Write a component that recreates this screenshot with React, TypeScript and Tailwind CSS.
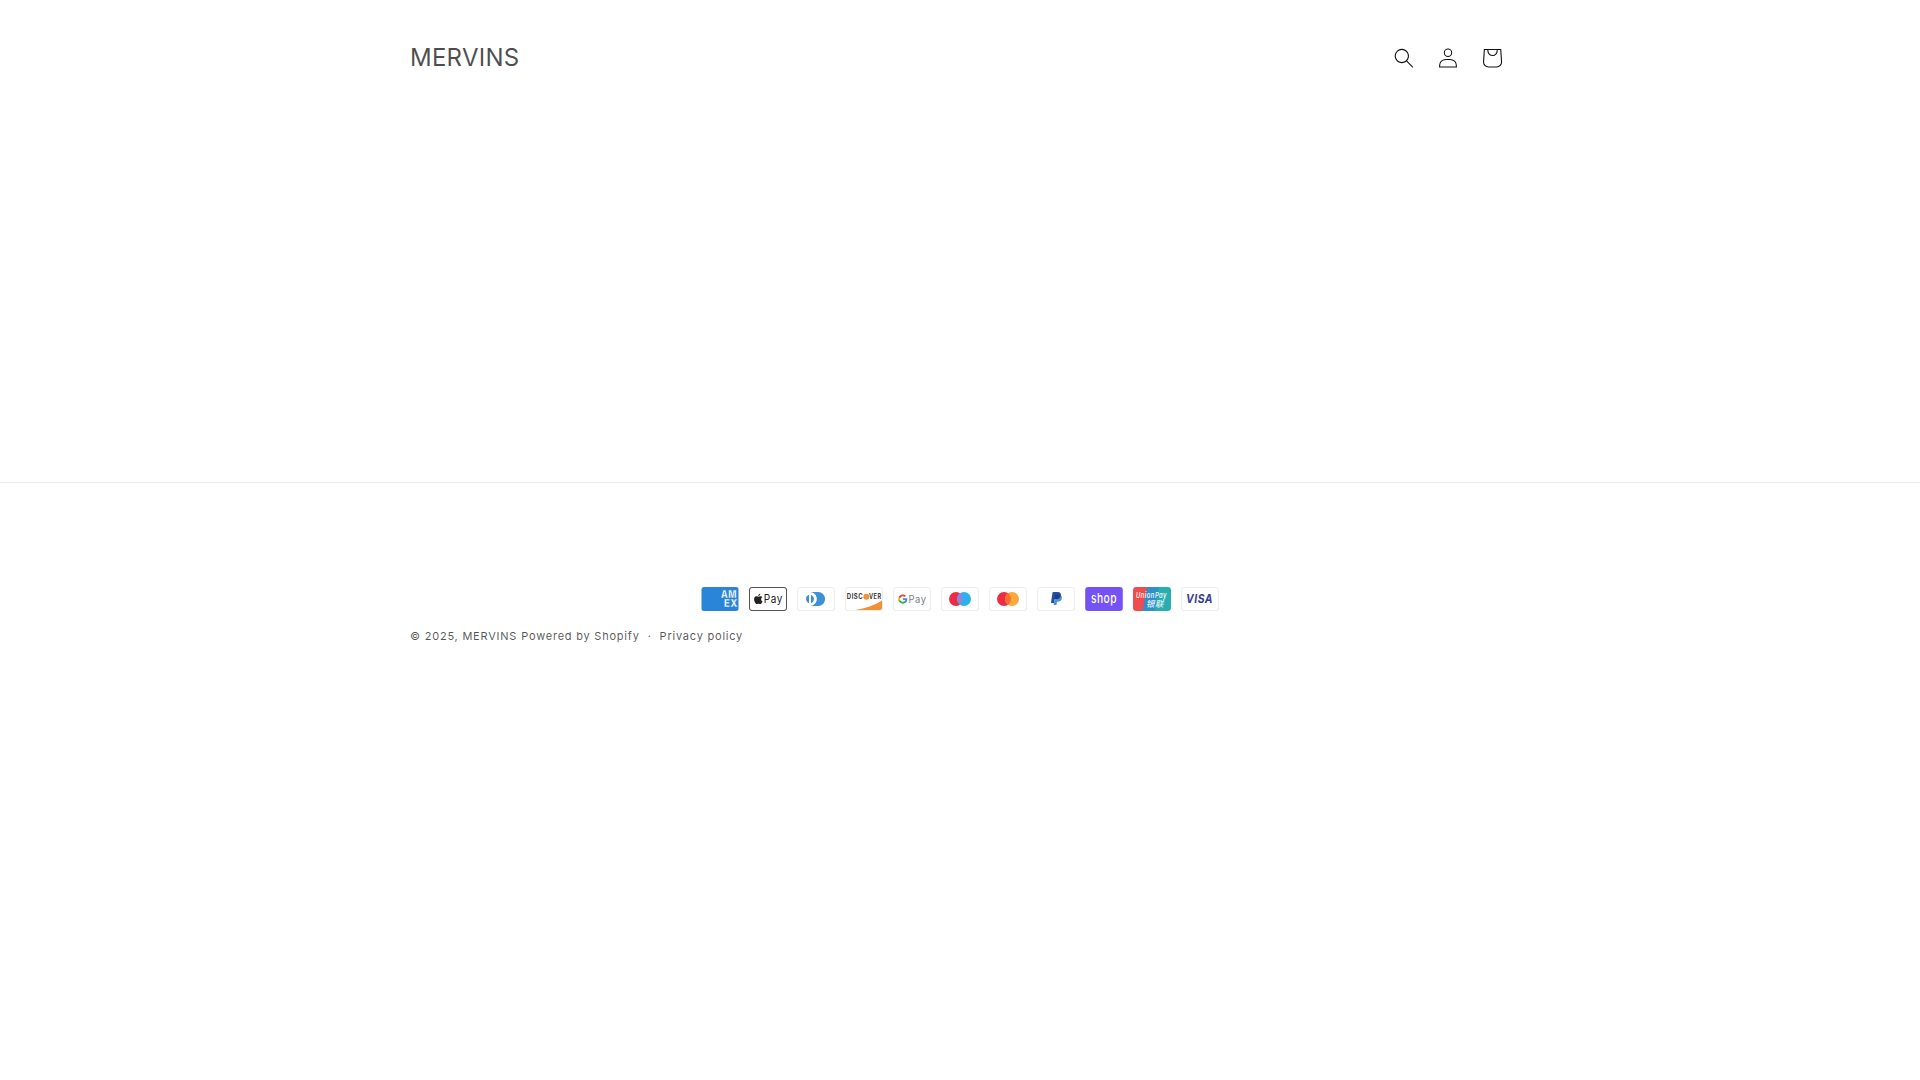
import React from "react";

const Frame = () => (
  <>
    <path opacity=".07" d="M35 0H3C1.3 0 0 1.3 0 3v18c0 1.7 1.4 3 3 3h32c1.7 0 3-1.3 3-3V3c0-1.7-1.4-3-3-3z" />
    <path fill="#fff" d="M35 1c1.1 0 2 .9 2 2v18c0 1.1-.9 2-2 2H3c-1.1 0-2-.9-2-2V3c0-1.1.9-2 2-2h32" />
  </>
);

const Svg = ({ children, label }: { children: React.ReactNode; label: string }) => (
  <svg viewBox="0 0 38 24" width="38" height="24" role="img" aria-label={label} className="block">
    {children}
  </svg>
);

const FONT = "Inter, 'Liberation Sans', sans-serif";

const Amex = () => (
  <Svg label="American Express">
    <rect x=".5" width="37" height="24" rx="2.5" fill="#2a84d8" />
    <g fontFamily={FONT} fontWeight="800" fill="#fff" stroke="#2a84d8" strokeWidth=".3">
      <text x="20" y="11.4" fontSize="10" textLength="16" lengthAdjust="spacingAndGlyphs">AM</text>
      <text x="23" y="20.2" fontSize="10" textLength="14" lengthAdjust="spacingAndGlyphs">EX</text>
    </g>
  </Svg>
);

const Apple = () => (
  <Svg label="Apple Pay">
    <path fill="#000" opacity=".68" d="M35 0H3C1.3 0 0 1.3 0 3v18c0 1.7 1.4 3 3 3h32c1.7 0 3-1.3 3-3V3c0-1.7-1.4-3-3-3z" />
    <path fill="#fff" d="M35 1c1.1 0 2 .9 2 2v18c0 1.1-.9 2-2 2H3c-1.1 0-2-.9-2-2V3c0-1.1.9-2 2-2h32" />
    <path fill="#222" d="M10.7 8.3c-.4.5-1 .8-1.5.8-.1-.6.2-1.2.5-1.6.4-.5 1-.8 1.5-.8.1.6-.1 1.2-.5 1.6zm.5.9c-.8 0-1.5.5-1.9.5s-1-.5-1.7-.4c-.9 0-1.7.5-2.1 1.3-.9 1.6-.2 3.9.7 5.2.4.6 1 1.3 1.6 1.3.7 0 .9-.4 1.7-.4s1 .4 1.7.4 1.2-.6 1.6-1.3c.5-.7.7-1.4.7-1.5 0 0-1.4-.5-1.4-2.1 0-1.3 1.1-2 1.2-2-.7-1-1.6-1.1-1.9-1z" />
    <text x="14.8" y="16.3" fontFamily={FONT} fontSize="11.5" fontWeight="400" fill="#222" textLength="19" lengthAdjust="spacingAndGlyphs">Pay</text>
  </Svg>
);

const Diners = () => (
  <Svg label="Diners Club">
    <Frame />
    <path fill="#3f8fd6" d="M12 12v3.7c0 .3-.2.3-.5.2-1.9-.8-3-3.3-2.3-5.4.4-1.1 1.2-2 2.3-2.4.4-.2.5-.1.5.2V12zm2 0V8.3c0-.3 0-.3.3-.2 2.1.8 3.2 3.3 2.4 5.4-.4 1.1-1.2 2-2.3 2.4-.4.2-.4.1-.4-.2V12zm7.2-7H13c3.8 0 6.8 3.1 6.8 7s-3 7-6.8 7h8.2c3.8 0 6.8-3.1 6.8-7s-3-7-6.8-7z" />
  </Svg>
);

const Discover = () => (
  <Svg label="Discover">
    <Frame />
    <path fill="#F58F34" d="M37 13.5V21c0 1.1-.9 2-2 2H10.500C20 21.5 30 18 37 13.5z" />
    <g fontFamily={FONT} fontSize="7" fontWeight="700" fill="#3a3a3a">
      <text x="1.8" y="12.2" textLength="16.5" lengthAdjust="spacingAndGlyphs">DISC</text>
      <text x="24" y="12.2" textLength="12.5" lengthAdjust="spacingAndGlyphs">VER</text>
    </g>
    <circle cx="21.3" cy="9.7" r="3" fill="#F58F34" />
  </Svg>
);

const GPay = () => (
  <Svg label="Google Pay">
    <Frame />
    <g transform="translate(4.8 7) scale(.42)">
      <path fill="#4285F4" d="M22.6 12.3c0-.8-.1-1.5-.2-2.3H12v4.3h6c-.3 1.4-1 2.6-2.2 3.4v2.8h3.6c2.1-1.9 3.2-4.8 3.2-8.2z" />
      <path fill="#34A853" d="M12 23c3 0 5.5-1 7.4-2.7l-3.6-2.8c-1 .7-2.3 1.1-3.8 1.1-2.9 0-5.4-2-6.3-4.6H2v2.9C3.8 20.5 7.6 23 12 23z" />
      <path fill="#FBBC04" d="M5.7 14c-.2-.7-.4-1.3-.4-2s.1-1.4.4-2V7.1H2C1.2 8.6.8 10.2.8 12s.4 3.4 1.2 4.9L5.7 14z" />
      <path fill="#EA4335" d="M12 5.4c1.6 0 3.1.6 4.2 1.7l3.2-3.2C17.5 2.1 15 1 12 1 7.6 1 3.8 3.5 2 7.1L5.7 10c.9-2.6 3.4-4.6 6.3-4.6z" />
    </g>
    <text x="15.5" y="16" fontFamily={FONT} fontSize="10.5" fontWeight="400" fill="#7b7d80" textLength="18" lengthAdjust="spacingAndGlyphs">Pay</text>
  </Svg>
);

const Maestro = () => (
  <Svg label="Maestro">
    <Frame />
    <circle cx="15" cy="12" r="7" fill="#EE2B45" />
    <circle cx="23" cy="12" r="7" fill="#29B1F0" />
    <path fill="#8A88D8" d="M22 12c0-2.4-1.200-4.500-3-5.700-1.800 1.300-3 3.400-3 5.700s1.200 4.500 3 5.700c1.800-1.200 3-3.300 3-5.700z" />
  </Svg>
);

const Mastercard = () => (
  <Svg label="Mastercard">
    <Frame />
    <circle cx="15" cy="12" r="7" fill="#EE2B45" />
    <circle cx="23" cy="12" r="7" fill="#FDA83A" />
    <path fill="#F9702E" d="M22 12c0-2.4-1.200-4.500-3-5.700-1.800 1.300-3 3.400-3 5.700s1.200 4.500 3 5.700c1.800-1.200 3-3.300 3-5.700z" />
  </Svg>
);

const PayPal = () => (
  <Svg label="PayPal">
    <Frame />
    <path fill="#24509f" d="M23.9 8.3c.2-1 0-1.700-.6-2.300-.6-.7-1.700-1-3.100-1h-4.100c-.3 0-.5.2-.6.5L14 15.600c0 .2.1.4.3.4H17l.4-3.400 1.800-2.200 4.700-2.100z" />
    <path fill="#4a93d6" d="M23.9 8.3l-.2.2c-.5 2.800-2.200 3.800-4.600 3.800H18c-.3 0-.5.2-.6.5l-.6 3.900-.2 1c0 .2.1.4.3.4H19c.3 0 .5-.2.5-.4v-.1l.4-2.400v-.1c0-.2.3-.4.5-.4h.3c2.100 0 3.700-.8 4.100-3.200.2-1 .1-1.800-.4-2.400-.1-.5-.3-.7-.5-.8z" />
    <path fill="#1d3f86" d="M23.3 8.100c-.1-.1-.2-.1-.3-.1-.1 0-.2 0-.3-.1-.3-.1-.7-.1-1.100-.1h-3c-.1 0-.2 0-.2.1-.2.1-.3.2-.3.4l-.7 4.400v.1c.1-.3.3-.5.6-.5h1.300c2.500 0 4.100-1 4.600-3.800v-.2c-.1-.1-.3-.2-.5-.2h-.1z" />
  </Svg>
);

const Shop = () => (
  <Svg label="Shop Pay">
    <rect x=".2" width="37.6" height="24" rx="3" fill="#7552F5" />
    <text x="6" y="15.5" fontFamily={FONT} fontSize="13" fontWeight="500" fill="#fff" textLength="26" lengthAdjust="spacingAndGlyphs">shop</text>
  </Svg>
);

const Union = () => (
  <Svg label="UnionPay">
    <path fill="#EF4C50" d="M3 0h12.500L11 24H3c-1.700 0-3-1.300-3-3V3c0-1.700 1.300-3 3-3z" />
    <path fill="#2F8FCA" d="M14 0h13.500L23 24H9.500z" />
    <path fill="#28AEB0" d="M26 0h9c1.700 0 3 1.300 3 3v18c0 1.700-1.300 3-3 3H21.500z" />
    <text x="3" y="10.6" fontFamily={FONT} fontSize="7.4" fontWeight="600" fontStyle="italic" fill="#fff" opacity=".92" textLength="31" lengthAdjust="spacingAndGlyphs">UnionPay</text>
    <text x="13" y="20.3" fontFamily="'Noto Sans CJK SC', sans-serif" fontSize="8.5" fontWeight="500" fontStyle="italic" fill="#fff" opacity=".85">银联</text>
  </Svg>
);

const Visa = () => (
  <Svg label="Visa">
    <Frame />
    <text x="5" y="16.2" fontFamily={FONT} fontSize="12" fontWeight="700" fontStyle="italic" fill="#33408f" textLength="27" lengthAdjust="spacingAndGlyphs">VISA</text>
  </Svg>
);

const payments = [Amex, Apple, Diners, Discover, GPay, Maestro, Mastercard, PayPal, Shop, Union, Visa];

export default function App() {
  return (
    <div className="min-h-[1080px] bg-white font-['Inter','Liberation_Sans',sans-serif] tracking-[0.6px] text-[rgba(18,18,18,0.75)]">
      <header className="mx-auto flex h-[115px] w-[1200px] items-center justify-between px-[50px]">
        <a className="text-[24px] leading-[28px] tracking-[0.25px] text-[rgba(18,18,18,0.75)]">MERVINS</a>
        <div className="-mr-1 flex text-[#121212]">
          <button className="flex h-[44px] w-[44px] items-center justify-center" aria-label="Search">
            <svg viewBox="0 0 18 19" fill="currentColor" className="h-5 w-5">
              <path fillRule="evenodd" clipRule="evenodd" d="M11.03 11.68A5.784 5.784 0 112.85 3.5a5.784 5.784 0 018.18 8.18zm.26 1.12a6.78 6.78 0 11.72-.7l5.4 5.4a.5.5 0 11-.71.7l-5.41-5.4z" />
            </svg>
          </button>
          <button className="flex h-[44px] w-[44px] items-center justify-center" aria-label="Log in">
            <svg viewBox="0 0 18 19" fill="currentColor" className="h-5 w-5">
              <path fillRule="evenodd" clipRule="evenodd" d="M6 4.5a3 3 0 116 0 3 3 0 01-6 0zm3-4a4 4 0 100 8 4 4 0 000-8zm5.58 12.15c1.12.82 1.83 2.24 1.91 4.85H1.51c.08-2.6.79-4.03 1.9-4.85C4.66 11.75 6.5 11.5 9 11.5s4.35.26 5.58 1.15zM9 10.5c-2.5 0-4.65.24-6.17 1.35C1.27 12.98.5 14.93.5 18v.5h17V18c0-3.07-.77-5.02-2.33-6.15-1.52-1.1-3.67-1.35-6.17-1.35z" />
            </svg>
          </button>
          <button className="flex h-[44px] w-[44px] items-center justify-center" aria-label="Cart">
            <svg viewBox="0 0 40 40" fill="none" className="h-[44px] w-[44px]">
              <path fill="currentColor" fillRule="evenodd" d="M15.75 11.8h-3.16l-.77 11.6a5 5 0 0 0 4.99 5.34h7.38a5 5 0 0 0 4.99-5.33L28.4 11.8zm0 1h-2.22l-.71 10.67a4 4 0 0 0 3.99 4.27h7.38a4 4 0 0 0 4-4.27l-.72-10.67h-2.22v.63a4.75 4.75 0 1 1-9.5 0zm8.5 0h-7.5v.63a3.75 3.75 0 1 0 7.5 0z" />
            </svg>
          </button>
        </div>
      </header>
      <main className="h-[367px]" />
      <footer className="border-t border-[rgba(18,18,18,0.08)] pt-[104px]">
        <div className="mx-auto w-[1200px] px-[50px]">
          <ul className="flex justify-center gap-[10px]">
            {payments.map((P, i) => (
              <li key={i}>
                <P />
              </li>
            ))}
          </ul>
          <div className="mt-[16px] flex items-center text-[11px] leading-[18px] tracking-[0.78px] text-[rgba(18,18,18,0.72)]">
            <span>© 2025, MERVINS</span>
            <span className="ml-[4px]">Powered by Shopify</span>
            <span className="mx-[8px]">·</span>
            <span>Privacy policy</span>
          </div>
        </div>
      </footer>
    </div>
  );
}
